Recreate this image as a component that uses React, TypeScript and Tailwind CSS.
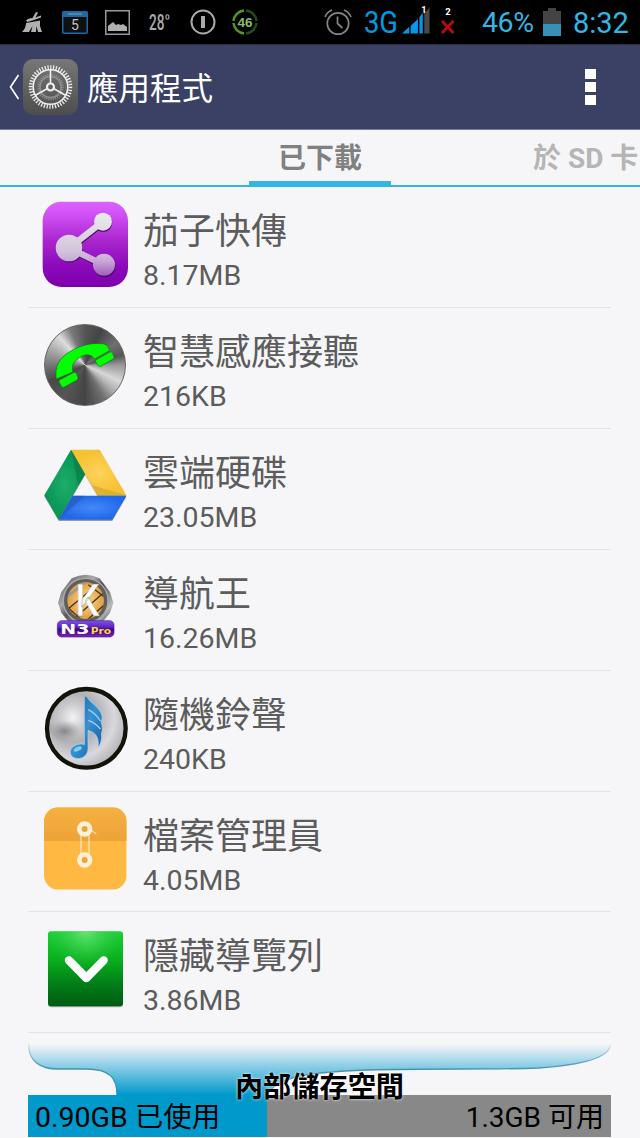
import React from 'react';

interface AppEntry {
  name: string;
  size: string;
  icon: React.ReactNode;
}

const iconClass = 'block h-[88px] w-[88px]';

function ShareIcon() {
  return (
    <svg viewBox="33 33 264 264" className={iconClass}>
      <defs>
        <linearGradient id="share-bg" x1="0" y1="0" x2="0" y2="1">
          <stop offset="0" stopColor="#dd62ff" />
          <stop offset="0.12" stopColor="#d355f8" />
          <stop offset="0.45" stopColor="#aa27cf" />
          <stop offset="0.75" stopColor="#8c0abb" />
          <stop offset="1" stopColor="#7d00ac" />
        </linearGradient>
        <linearGradient id="share-fg" gradientUnits="userSpaceOnUse" x1="0" y1="68" x2="0" y2="260">
          <stop offset="0" stopColor="#ececec" />
          <stop offset="0.6" stopColor="#d3c3da" />
          <stop offset="0.75" stopColor="#c9a8d8" />
          <stop offset="1" stopColor="#9d5cb8" />
        </linearGradient>
      </defs>
      <rect x="38" y="35" width="256" height="256" rx="57" fill="url(#share-bg)" />
      <g transform="translate(2 4)" fill="#42105c" stroke="#42105c">
        <path d="M218 95L117 174L222 225" fill="none" strokeWidth="18" />
        <circle cx="218" cy="95" r="26" />
        <circle cx="117" cy="174" r="39" />
        <circle cx="222" cy="225" r="32" />
      </g>
      <path d="M218 95L117 174L222 225" fill="none" stroke="url(#share-fg)" strokeWidth="19" />
      <circle cx="219" cy="95" r="27" fill="url(#share-fg)" />
      <circle cx="117" cy="174" r="40" fill="url(#share-fg)" />
      <circle cx="222" cy="224" r="33" fill="url(#share-fg)" />
    </svg>
  );
}

function PhoneIcon() {
  return (
    <div className="relative h-[88px] w-[88px]">
      <div className="absolute top-[2px] left-[3px] h-[82px] w-[82px] rounded-full border border-[#666] bg-[conic-gradient(#555_0deg,#444_25deg,#707070_55deg,#555_75deg,#999_90deg,#d8d8d8_115deg,#b0b0b0_132deg,#707070_150deg,#444_180deg,#555_215deg,#484848_245deg,#777_270deg,#aaa_295deg,#ddd_318deg,#777_338deg,#555_360deg)]" />
      <svg viewBox="33 36 264 264" className="absolute inset-0 h-full w-full">
        <g fill="#0f0" stroke="#226622" strokeWidth="2">
          <path d="M79 207C73 168 89 144 118 126C150 106 184 98 216 101C230 102 235 109 238 122L194 147C181 130 164 132 148 143C130 155 124 168 129 186Z" />
          <path d="M199 149L240 126Q246 124 248 130L252 141Q253 146 248 148L212 169Q207 171 205 167L197 155Q196 151 199 149Z" />
          <path d="M90 209L132 187Q137 185 139 190L144 202Q145 208 140 211L102 232Q96 234 94 229L87 216Q86 211 90 209Z" />
        </g>
      </svg>
    </div>
  );
}

function DriveIcon() {
  return (
    <svg viewBox="33 39 264 264" className={iconClass}>
      <defs>
        <radialGradient id="drive-green">
          <stop offset="0" stopColor="#1ead6a" />
          <stop offset="1" stopColor="#069454" />
        </radialGradient>
        <radialGradient id="drive-yellow">
          <stop offset="0" stopColor="#ffd35c" />
          <stop offset="1" stopColor="#f5c030" />
        </radialGradient>
        <radialGradient id="drive-blue">
          <stop offset="0" stopColor="#4688fa" />
          <stop offset="1" stopColor="#2068e8" />
        </radialGradient>
        <filter id="drive-shadow" x="-10%" y="-10%" width="120%" height="125%">
          <feDropShadow dx="0" dy="3" stdDeviation="2" floodOpacity="0.5" />
        </filter>
      </defs>
      <g filter="url(#drive-shadow)">
        <path d="M123 59H209L289 196H203Z" fill="url(#drive-yellow)" />
        <path d="M123 59L165 133L86 269L43 196Z" fill="url(#drive-green)" />
        <path d="M128 197H289L247 269H86Z" fill="url(#drive-blue)" />
      </g>
      <path d="M123 59L165 133L145 166Z" fill="#0b8049" opacity="0.8" />
      <path d="M186 166L289 196H203Z" fill="#d8aa2d" opacity="0.75" />
      <path d="M128 197H165L86 269Z" fill="#2557bd" opacity="0.65" />
    </svg>
  );
}

function NaviKingIcon() {
  return (
    <svg viewBox="33 12 264 264" className={iconClass}>
      <defs>
        <linearGradient id="navi-rim" x1="0" y1="0" x2="1" y2="1">
          <stop offset="0" stopColor="#555" />
          <stop offset="0.35" stopColor="#aaa" />
          <stop offset="0.5" stopColor="#555" />
          <stop offset="0.8" stopColor="#bbb" />
          <stop offset="1" stopColor="#444" />
        </linearGradient>
        <linearGradient id="navi-plate" x1="0" y1="0" x2="0" y2="1">
          <stop offset="0" stopColor="#8050ec" />
          <stop offset="0.45" stopColor="#5520b8" />
          <stop offset="0.5" stopColor="#3b047f" />
          <stop offset="1" stopColor="#7a22bd" />
        </linearGradient>
        <radialGradient id="navi-gold">
          <stop offset="0" stopColor="#ffdb88" />
          <stop offset="1" stopColor="#e39d42" />
        </radialGradient>
        <clipPath id="navi-clip">
          <circle cx="167" cy="122" r="55" />
        </clipPath>
      </defs>
      <path d="M125 55Q167 34 209 55L240 96L250 128L240 158L216 188H118L94 158L84 128L94 96Z" fill="url(#navi-rim)" />
      <circle cx="167" cy="122" r="67" fill="#5f5e5e" stroke="#ababab" strokeWidth="4" />
      <circle cx="167" cy="122" r="55" fill="url(#navi-gold)" />
      <g clipPath="url(#navi-clip)" fill="none">
        <path d="M105 155L215 63M130 178L235 86M160 190L240 120" stroke="#3e3428" strokeWidth="4" />
        <path d="M105 115L175 60" stroke="#999" strokeWidth="8" />
        <path d="M100 130L155 180M175 74L225 112" stroke="#4b3b2a" strokeWidth="4" />
      </g>
      <text x="136" y="168" fontSize="132" textLength="72" lengthAdjust="spacingAndGlyphs" fill="#fff" stroke="#777" strokeWidth="1" className="font-['Roboto',sans-serif] font-medium">K</text>
      <rect x="82" y="182" width="170" height="49" rx="13" fill="url(#navi-plate)" stroke="#4d278a" strokeWidth="2" />
      <text x="91" y="221" fontSize="42" textLength="87" lengthAdjust="spacingAndGlyphs" fill="#fff" className="font-['DejaVu_Sans',sans-serif] font-bold">N3</text>
      <text x="182" y="221" fontSize="25" textLength="61" lengthAdjust="spacingAndGlyphs" fill="#ffd83b" className="font-['DejaVu_Sans',sans-serif] font-bold">Pro</text>
    </svg>
  );
}

function RingtoneIcon() {
  return (
    <svg viewBox="33 44 264 264" className={iconClass}>
      <defs>
        <radialGradient id="ring-bg" cx="0.33" cy="0.36" r="0.75">
          <stop offset="0" stopColor="#f4f4f7" />
          <stop offset="0.2" stopColor="#cfcfd2" />
          <stop offset="0.42" stopColor="#b1b1b5" />
          <stop offset="0.7" stopColor="#d9d9dd" />
          <stop offset="1" stopColor="#aaaaae" />
        </radialGradient>
        <radialGradient id="ring-shade">
          <stop offset="0" stopColor="#76767a" stopOpacity="0.8" />
          <stop offset="1" stopColor="#8f8f92" stopOpacity="0" />
        </radialGradient>
        <linearGradient id="ring-note" x1="0" y1="0" x2="1" y2="1">
          <stop offset="0" stopColor="#1d5f9c" />
          <stop offset="0.5" stopColor="#3492d2" />
          <stop offset="1" stopColor="#154f92" />
        </linearGradient>
      </defs>
      <circle cx="169" cy="174" r="118" fill="url(#ring-bg)" stroke="#12140b" strokeWidth="13" />
      <ellipse cx="104" cy="182" rx="48" ry="32" fill="url(#ring-shade)" />
      <path d="M163 78H170C178 96 200 104 212 126C218 138 217 148 213 155C219 170 217 182 214 190C216 208 212 222 204 231C208 206 201 188 174 180V235C173 262 145 271 128 260C113 247 124 226 145 222C153 219 159 222 163 223Z" fill="url(#ring-note)" stroke="#b0d5f0" strokeWidth="2" />
      <path d="M175 118Q198 130 211 152M175 150Q197 158 211 176" fill="none" stroke="#a8cce8" strokeWidth="4" />
      <ellipse cx="143" cy="236" rx="13" ry="6" transform="rotate(-25 143 236)" fill="#81cbef" />
    </svg>
  );
}

function FileManagerIcon() {
  return (
    <svg viewBox="33 47 264 264" className={iconClass}>
      <defs>
        <clipPath id="file-clip">
          <rect x="42" y="51" width="248" height="247" rx="43" />
        </clipPath>
        <linearGradient id="file-flap" x1="0" y1="0" x2="0" y2="1">
          <stop offset="0" stopColor="#f5b140" />
          <stop offset="1" stopColor="#eda337" />
        </linearGradient>
      </defs>
      <g clipPath="url(#file-clip)">
        <rect x="42" y="51" width="248" height="247" fill="#ffb943" />
        <rect x="42" y="51" width="248" height="101" fill="url(#file-flap)" />
      </g>
      <path d="M153 116V209M177 116V209M182 118L199 131" fill="none" stroke="#fff0d6" strokeWidth="3" />
      <g fill="#eda337" stroke="#fff0d6" strokeWidth="14">
        <circle cx="164" cy="116" r="16" />
        <circle cx="164" cy="209" r="16" />
      </g>
    </svg>
  );
}

function HideBarIcon() {
  return (
    <svg viewBox="33 50 264 264" className={iconClass}>
      <defs>
        <linearGradient id="hide-bg" x1="0" y1="0" x2="0" y2="1">
          <stop offset="0" stopColor="#1dd136" />
          <stop offset="0.4" stopColor="#08ac1d" />
          <stop offset="0.7" stopColor="#007e16" />
          <stop offset="1" stopColor="#005b14" />
        </linearGradient>
        <radialGradient id="hide-glow" cx="0.5" cy="0" r="0.5">
          <stop offset="0" stopColor="#7be985" stopOpacity="0.8" />
          <stop offset="1" stopColor="#34cd45" stopOpacity="0" />
        </radialGradient>
      </defs>
      <rect x="54" y="69" width="225" height="225" rx="10" fill="#777" opacity="0.6" />
      <rect x="54" y="66" width="225" height="225" rx="10" fill="url(#hide-bg)" />
      <rect x="54" y="66" width="225" height="225" rx="10" fill="url(#hide-glow)" />
      <path d="M117 153L169 206L221 153" fill="none" stroke="#fff" strokeWidth="25" strokeLinecap="round" strokeLinejoin="round" />
    </svg>
  );
}

const apps: AppEntry[] = [
  { name: '茄子快傳', size: '8.17MB', icon: <ShareIcon /> },
  { name: '智慧感應接聽', size: '216KB', icon: <PhoneIcon /> },
  { name: '雲端硬碟', size: '23.05MB', icon: <DriveIcon /> },
  { name: '導航王', size: '16.26MB', icon: <NaviKingIcon /> },
  { name: '隨機鈴聲', size: '240KB', icon: <RingtoneIcon /> },
  { name: '檔案管理員', size: '4.05MB', icon: <FileManagerIcon /> },
  { name: '隱藏導覽列', size: '3.86MB', icon: <HideBarIcon /> },
];

function StatusBar() {
  return (
    <div className="flex h-11 items-center bg-black whitespace-nowrap">
      {/* Notifications */}
      <svg viewBox="0 0 20 22" className="ml-[22px] h-[22px] w-5 shrink-0" fill="#b0b0b0">
        <path d="M14 1L16 1.5L13.5 6.5L19 4.5V6.5L12 9L5.5 11L4 9.5Q6 7 10.5 7Z" />
        <path d="M4 12L18 9.5V15L20 21H16L14.5 15L14 21H9L10.5 15L7 21H0Q4 17 4 12Z" />
      </svg>
      <svg viewBox="0 0 26 23" className="ml-5 h-[23px] w-[26px] shrink-0">
        <rect x="0.75" y="0.75" width="24.5" height="21.5" rx="1" fill="#111" stroke="#1d68a5" strokeWidth="1.5" />
        <path d="M0 1H26V6H0Z" fill="#1d68a5" />
        <path d="M6 3H20" stroke="#75a7cc" />
        <text x="13" y="19" textAnchor="middle" fontSize="14" fill="#c5c5c5" className="font-['Roboto',sans-serif]">5</text>
      </svg>
      <svg viewBox="0 0 25 25" className="ml-[17px] h-[25px] w-[25px] shrink-0">
        <rect x="0.75" y="0.75" width="23.5" height="23.5" fill="none" stroke="#999" strokeWidth="1.5" />
        <path d="M3 21V16L8 12L11 15L13 14L16 15L18 14L22 17V21Z" fill="#b0b0b0" />
      </svg>
      <svg viewBox="0 -4 22 30" className="ml-[19px] h-[30px] w-[22px] shrink-0">
        <text x="0" y="19" fontSize="22" textLength="15.5" lengthAdjust="spacingAndGlyphs" fill="#aaa" className="font-['Roboto',sans-serif] font-medium">28</text>
        <ellipse cx="18.4" cy="6" rx="1.5" ry="2.2" fill="none" stroke="#aaa" strokeWidth="1.1" />
      </svg>
      <svg viewBox="0 0 26 26" className="ml-[19px] h-[26px] w-[26px] shrink-0" fill="none" stroke="#aaa">
        <circle cx="13" cy="13" r="11.5" strokeWidth="2" />
        <path d="M13 7V19" strokeWidth="4" />
      </svg>
      <svg viewBox="0 0 26 26" className="ml-4 h-[26px] w-[26px] shrink-0">
        <path d="M14 1.5A11.5 11.5 0 0 1 24.5 12M24.5 14A11.5 11.5 0 0 1 14 24.5" fill="none" stroke="#244d17" strokeWidth="2.5" />
        <path d="M12 24.5A11.5 11.5 0 0 1 1.5 14M1.5 12A11.5 11.5 0 0 1 12 1.5" fill="none" stroke="#51961f" strokeWidth="2.5" />
        <text x="13" y="17.5" textAnchor="middle" fontSize="13.5" fill="#89bd68" className="font-['Liberation_Sans',sans-serif] font-bold">46</text>
      </svg>

      {/* System */}
      <svg viewBox="0 0 28 28" className="ml-[66px] h-7 w-7 shrink-0" fill="none" stroke="#858585" strokeWidth="1.7">
        <circle cx="14" cy="15.5" r="10.7" />
        <path d="M13.5 8.5V15.5L18.5 20M1 9Q3 4 8 2M20 2Q25 4 27 9" />
      </svg>
      <svg viewBox="0 -4 35 40" className="ml-3 h-10 w-[35px] shrink-0">
        <text x="0" y="27" fontSize="32" textLength="34" lengthAdjust="spacingAndGlyphs" fill="#0099e5" className="font-['Roboto',sans-serif]">3G</text>
      </svg>
      <svg viewBox="0 -4 30 40" className="ml-[3px] h-10 w-[29px] shrink-0">
        <path d="M0 28L7.5 21V28ZM9 28V20L16.5 13V28ZM18 28V11L21.5 6.5V28Z" fill="#0099e5" />
        <path d="M23 28V7L28.5 1V28Z" fill="#484848" />
        <text x="20" y="6.5" fontSize="9.5" fill="#fff" className="font-['Roboto',sans-serif] font-bold">1</text>
      </svg>
      <svg viewBox="0 -4 16 40" className="ml-[9px] h-10 w-4 shrink-0">
        <text x="8" y="9" textAnchor="middle" fontSize="9.5" fill="#fff" className="font-['Roboto',sans-serif] font-bold">2</text>
        <path d="M2 15L13.5 27M13.5 15L2 27" stroke="#b50d0d" strokeWidth="3" />
      </svg>
      <span className="mt-[2px] ml-[26px] w-[54px] text-[28.5px] leading-none tracking-[-0.4px] text-[#33b5e5]">46%</span>
      <svg viewBox="0 0 18 28" className="ml-[7px] h-7 w-[18px] shrink-0">
        <path d="M0 3H5V0H13V3H18V16H0Z" fill="#444" />
        <path d="M0 16H18V28H0Z" fill="#3790b5" />
      </svg>
      <span className="mt-[2px] ml-3 text-[29px] leading-none text-[#33b5e5]">8:32</span>
    </div>
  );
}

function SettingsIcon() {
  return (
    <svg viewBox="0 0 55 56" className="h-14 w-[55px] shrink-0" fill="none">
      <defs>
        <linearGradient id="settings-bg" x1="0" y1="0" x2="0" y2="1">
          <stop offset="0" stopColor="#777" />
          <stop offset="1" stopColor="#4d4d4d" />
        </linearGradient>
      </defs>
      <rect width="55" height="56" rx="10" fill="url(#settings-bg)" />
      <circle cx="27.5" cy="28" r="19.8" stroke="#e8e8e8" strokeWidth="4" strokeDasharray="1.3 1.5" />
      <circle cx="27.5" cy="28" r="17.3" stroke="#f0f0f0" strokeWidth="1.6" />
      <circle cx="27.5" cy="28" r="12" stroke="#8e8e8e" strokeWidth="2.5" strokeDasharray="1.1 1.1" />
      <circle cx="27.5" cy="28" r="10.5" stroke="#8e8e8e" strokeWidth="1.4" />
      <path d="M27.5 10V24.5M30.5 29.5L43 36.5M24.5 29.5L12 36.5" stroke="#f0f0f0" strokeWidth="1.6" />
      <circle cx="27.5" cy="28" r="3.5" stroke="#f0f0f0" strokeWidth="2.2" />
    </svg>
  );
}

function Header() {
  return (
    <header className="flex h-[86px] items-center border-t border-b border-t-[#282e48] border-b-[#777c9b] bg-[#3a4164]">
      <svg viewBox="0 0 11 26" className="ml-[9px] h-[26px] w-[11px]" fill="none" stroke="#fff" strokeWidth="1.7">
        <path d="M9.5 1L1.5 13L9.5 25" />
      </svg>
      <div className="ml-[3px]">
        <SettingsIcon />
      </div>
      <h1 className="mt-[6px] ml-[9px] text-[31.5px] leading-none text-white">應用程式</h1>
      <button className="mr-11 ml-auto flex flex-col gap-[3px]" aria-label="更多選項">
        <span className="h-[10px] w-[11px] bg-white" />
        <span className="h-[10px] w-[11px] bg-white" />
        <span className="h-[10px] w-[11px] bg-white" />
      </button>
    </header>
  );
}

function Tabs() {
  return (
    <nav className="flex h-[57px] justify-between overflow-hidden border-b-2 border-[#33b5e5] text-[28px] font-bold whitespace-nowrap">
      <div className="w-[249px]" />
      <div className="flex h-[55px] w-[142px] flex-col items-center border-b-4 border-[#33b5e5] text-[#808080]">
        <span className="leading-[57px]">已下載</span>
      </div>
      <div className="w-[249px] pl-[142px] leading-[57px] text-[#b5b5b5]">於 SD 卡</div>
    </nav>
  );
}

function StorageFooter() {
  return (
    <footer className="relative mx-7 mt-[10.56px] mr-[29px]">
      <svg viewBox="0 0 583 51" className="block h-[51px] w-[583px]">
        <defs>
          <linearGradient id="wave" x1="0" y1="0" x2="0" y2="1">
            <stop offset="0" stopColor="#0099cc" stopOpacity="0" />
            <stop offset="0.5" stopColor="#0099cc" stopOpacity="0.5" />
            <stop offset="1" stopColor="#0099cc" />
          </linearGradient>
          <linearGradient id="wave-edge" x1="0" y1="0" x2="0" y2="1">
            <stop offset="0" stopColor="#4b91ad" stopOpacity="0.1" />
            <stop offset="0.5" stopColor="#4b91ad" />
            <stop offset="1" stopColor="#2094bd" />
          </linearGradient>
        </defs>
        <path d="M0 0C0 17 12 25 30 25H58C82 25 89 34 89 51H239C249 33 278 28 339 26C410 24 463 26 510 24C555 21 582 14 583 0Z" fill="url(#wave)" />
        <path d="M0.5 0C0.5 17 12 25 30 25H58C82 25 89 34 89 51M239 51C249 33 278 28 339 26C410 24 463 26 510 24C555 21 582 14 582.5 0" fill="none" stroke="url(#wave-edge)" strokeWidth="1.3" />
      </svg>
      <div className="flex h-[42px] bg-[#888] text-[28px] leading-[45px] whitespace-nowrap text-black">
        <div className="w-[239px] bg-[#0099cc] pl-[7px] text-[28.5px]">0.90GB 已使用</div>
        <div className="ml-auto pr-[7px]">1.3GB 可用</div>
      </div>
      <p className="absolute inset-x-0 top-[24px] text-center text-[28.2px] leading-10 font-bold text-black [text-shadow:0_0_3px_#fff]">內部儲存空間</p>
    </footer>
  );
}

export default function App() {
  return (
    <div className="h-[1138px] w-[640px] overflow-hidden bg-[#f6f6f9] font-['Roboto','Noto_Sans_CJK_TC',sans-serif]">
      <StatusBar />
      <Header />
      <Tabs />
      <ul className="mr-[29px] ml-7">
        {apps.map((app) => (
          <li key={app.name} className="flex h-[120.92px] border-b border-[#e2e2e5] pl-[13px]">
            <div className="mt-[14px]">{app.icon}</div>
            <div className="mt-[23px] ml-[14px] text-[#5c5c5c]">
              <div className="text-[36px] leading-[45px]">{app.name}</div>
              <div className="text-[28.5px] leading-[41px]">{app.size}</div>
            </div>
          </li>
        ))}
      </ul>
      <StorageFooter />
    </div>
  );
}
